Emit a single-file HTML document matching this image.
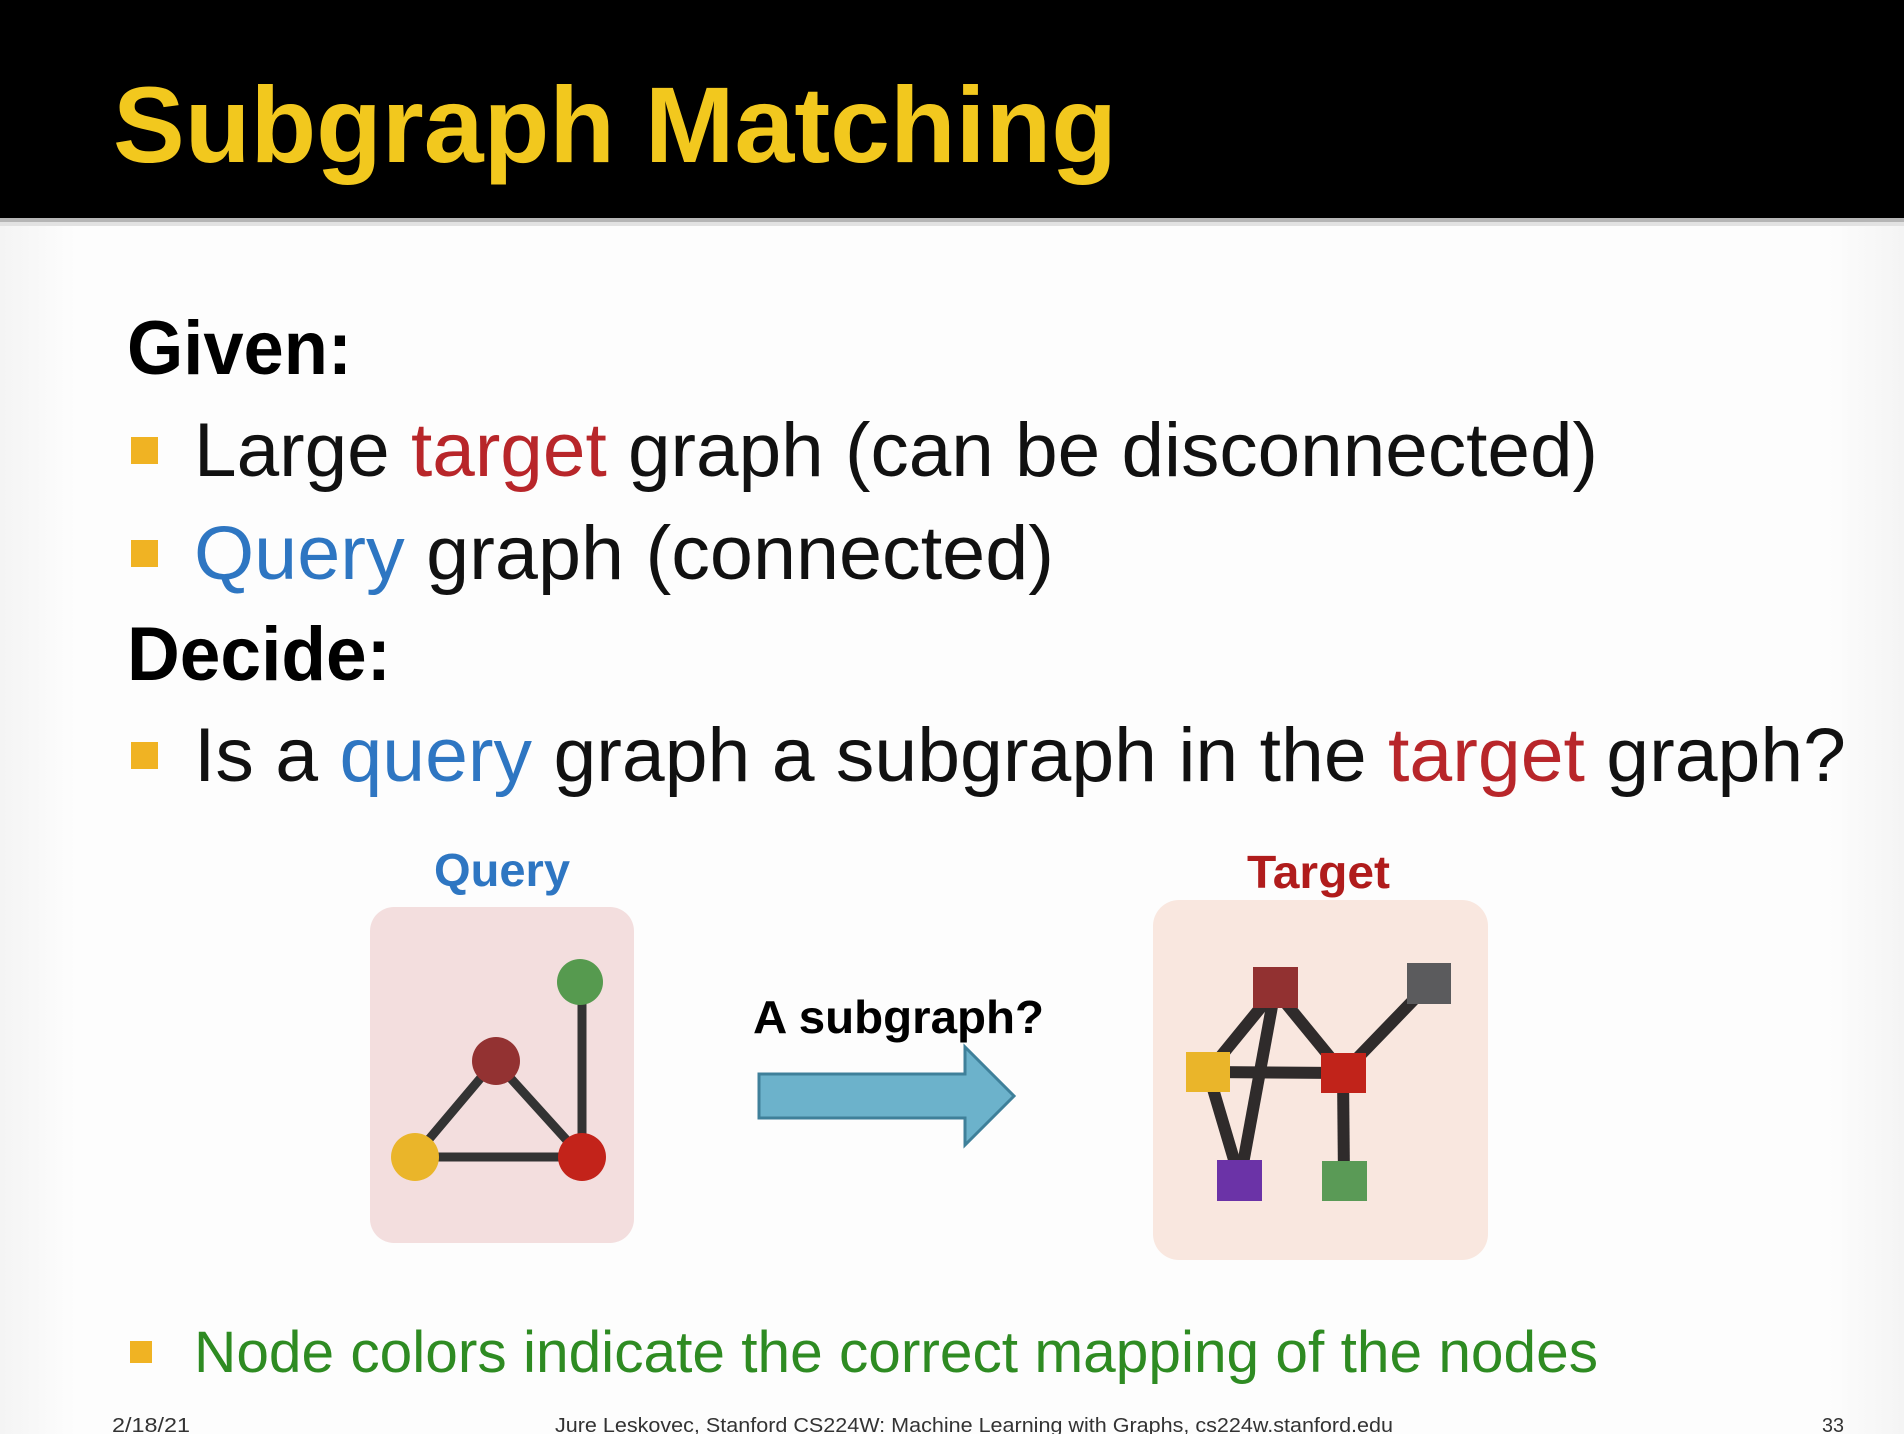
<!DOCTYPE html>
<html><head><meta charset="utf-8"><style>
html,body{margin:0;padding:0;background:#fff;}
svg{display:block;}
</style></head><body>
<svg width="1904" height="1434" viewBox="0 0 1904 1434" xmlns="http://www.w3.org/2000/svg">
<defs>
<linearGradient id="bg" x1="0" x2="1" y1="0" y2="0">
<stop offset="0" stop-color="#f4f4f4"/><stop offset="0.04" stop-color="#fdfdfd"/><stop offset="0.96" stop-color="#fdfdfd"/><stop offset="1" stop-color="#f4f4f4"/>
</linearGradient>
</defs>
<rect width="1904" height="1434" fill="url(#bg)"/>
<rect width="1904" height="218" fill="#000"/>
<rect y="218" width="1904" height="4" fill="#b5b5b5"/>
<rect y="222" width="1904" height="4" fill="#e2e2e2"/>
<g font-family="Liberation Sans, sans-serif">
<text x="113" y="162" font-size="108" font-weight="bold" fill="#f2c81e" textLength="1004" lengthAdjust="spacingAndGlyphs">Subgraph Matching</text>

<text x="127" y="374" font-size="76" font-weight="bold" fill="#000" textLength="225" lengthAdjust="spacingAndGlyphs">Given:</text>
<rect x="131" y="437" width="27" height="27" fill="#f0b323"/>
<text x="194" y="476" font-size="76" fill="#111" textLength="1404" lengthAdjust="spacingAndGlyphs">Large <tspan fill="#b8262a">target</tspan> graph (can be disconnected)</text>
<rect x="131" y="540" width="27" height="27" fill="#f0b323"/>
<text x="194" y="579" font-size="76" fill="#111" textLength="860" lengthAdjust="spacingAndGlyphs"><tspan fill="#2e76c2">Query</tspan> graph (connected)</text>
<text x="127" y="680" font-size="76" font-weight="bold" fill="#000" textLength="264" lengthAdjust="spacingAndGlyphs">Decide:</text>
<rect x="131" y="742" width="27" height="27" fill="#f0b323"/>
<text x="194" y="781" font-size="76" fill="#111" textLength="1652" lengthAdjust="spacingAndGlyphs">Is a <tspan fill="#2e76c2">query</tspan> graph a subgraph in the <tspan fill="#b8262a">target</tspan> graph?</text>

<text x="434" y="886" font-size="46" font-weight="bold" fill="#2e76c2" textLength="136" lengthAdjust="spacingAndGlyphs">Query</text>
<text x="1247" y="888" font-size="46" font-weight="bold" fill="#b01c1c" textLength="143" lengthAdjust="spacingAndGlyphs">Target</text>
<text x="753" y="1033" font-size="46" font-weight="bold" fill="#000" textLength="291" lengthAdjust="spacingAndGlyphs">A subgraph?</text>

<rect x="130" y="1341" width="22" height="22" fill="#f0b323"/>
<text x="194" y="1372" font-size="58" fill="#2e8b22" textLength="1404" lengthAdjust="spacingAndGlyphs">Node colors indicate the correct mapping of the nodes</text>

<text x="112" y="1432" font-size="20" fill="#333" textLength="78" lengthAdjust="spacingAndGlyphs">2/18/21</text>
<text x="555" y="1432" font-size="20" fill="#333" textLength="838" lengthAdjust="spacingAndGlyphs">Jure Leskovec, Stanford CS224W: Machine Learning with Graphs, cs224w.stanford.edu</text>
<text x="1822" y="1432" font-size="20" fill="#333" textLength="22" lengthAdjust="spacingAndGlyphs">33</text>
</g>

<!-- Query box -->
<rect x="370" y="907" width="264" height="336" rx="24" fill="#f3dede"/>
<g stroke="#333" stroke-width="9" stroke-linecap="round">
<line x1="495" y1="1061" x2="414" y2="1157"/>
<line x1="495" y1="1061" x2="582" y2="1157"/>
<line x1="414" y1="1157" x2="582" y2="1157"/>
<line x1="582" y1="982" x2="582" y2="1157"/>
</g>
<circle cx="580" cy="982" r="23" fill="#569a4f"/>
<circle cx="496" cy="1061" r="24" fill="#933232"/>
<circle cx="415" cy="1157" r="24" fill="#eab52a"/>
<circle cx="582" cy="1157" r="24" fill="#c3231a"/>

<!-- Arrow -->
<polygon points="759,1074 965,1074 965,1047 1014,1096 965,1145 965,1118 759,1118" fill="#6cb2cb" stroke="#3f809a" stroke-width="3"/>

<!-- Target box -->
<rect x="1153" y="900" width="335" height="360" rx="26" fill="#f9e7df"/>
<g stroke="#2f2b2b" stroke-width="12">
<line x1="1275" y1="990" x2="1208" y2="1072"/>
<line x1="1275" y1="990" x2="1343" y2="1073"/>
<line x1="1275" y1="990" x2="1240" y2="1180"/>
<line x1="1208" y1="1072" x2="1343" y2="1073"/>
<line x1="1208" y1="1072" x2="1240" y2="1180"/>
<line x1="1343" y1="1073" x2="1429" y2="984"/>
<line x1="1343" y1="1073" x2="1344" y2="1180"/>
</g>
<rect x="1253" y="967" width="45" height="41" fill="#923131"/>
<rect x="1407" y="963" width="44" height="41" fill="#5b5b5d"/>
<rect x="1186" y="1052" width="44" height="40" fill="#eab52a"/>
<rect x="1321" y="1053" width="45" height="40" fill="#c1231a"/>
<rect x="1217" y="1160" width="45" height="41" fill="#6b33a7"/>
<rect x="1322" y="1161" width="45" height="40" fill="#5a9a56"/>
</svg>
</body></html>
